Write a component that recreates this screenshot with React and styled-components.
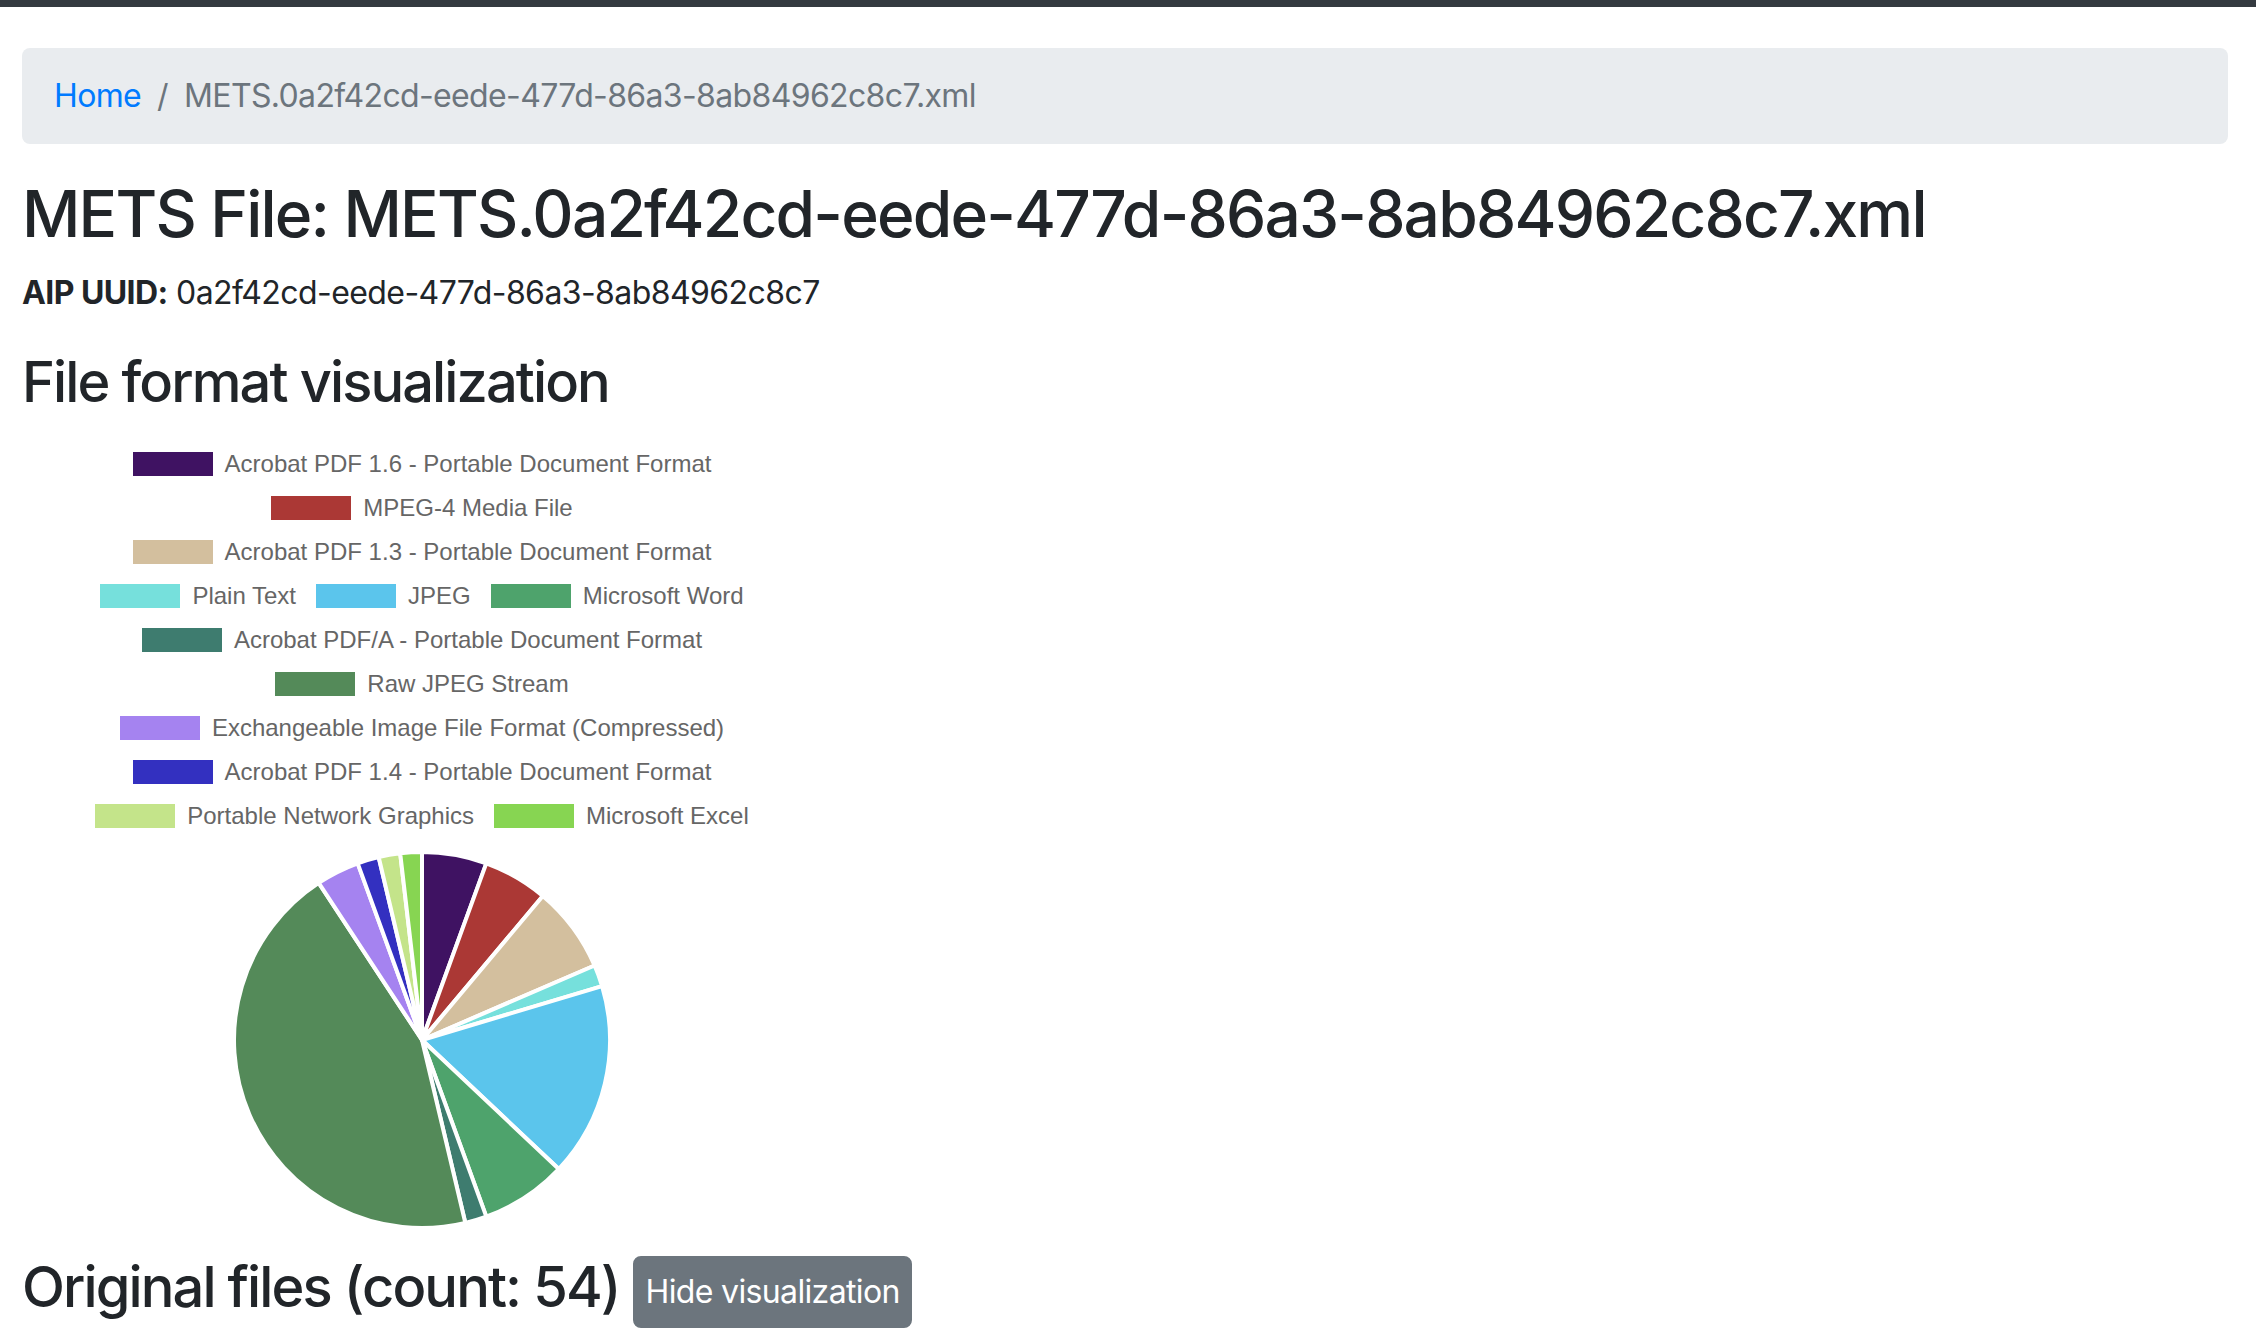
import React from 'react'
import styled, { createGlobalStyle } from 'styled-components'

const GlobalStyle = createGlobalStyle`
  html, body {
    margin: 0;
    padding: 0;
    background: #ffffff;
  }
  body {
    font-family: Inter, "Noto Sans", "Liberation Sans", sans-serif;
    font-size: 32px;
    line-height: 1.5;
    letter-spacing: -0.018em;
    color: #212529;
  }
`

const TopBar = styled.div`
  height: 7px;
  background-color: #343a40;
`

const Page = styled.main`
  padding: 41px 28px 0 22px;
`

const Breadcrumb = styled.nav`
  display: flex;
  align-items: center;
  padding: 24px 32px;
  margin-bottom: 32px;
  background-color: #e9ecef;
  border-radius: 8px;
  line-height: 48px;
  letter-spacing: -0.02em;
`

const Crumb = styled.a`
  color: #007bff;
  text-decoration: none;
`

const Separator = styled.span`
  color: #6c757d;
  padding: 0 16px;
`

const Current = styled.span`
  color: #6c757d;
`

const Title = styled.h2`
  margin: 0 0 16px;
  font-size: 64px;
  font-weight: 500;
  line-height: 1.2;
  letter-spacing: -0.028em;
`

const Meta = styled.p`
  margin: 0 0 32px;
  line-height: 48px;
`

const Label = styled.strong`
  font-weight: 700;
`

const Heading = styled.h3`
  margin: 0 0 16px;
  font-size: 56px;
  font-weight: 500;
  line-height: 1.2;
  letter-spacing: -0.034em;
`

const Chart = styled.div`
  width: 800px;
  height: 800px;
  display: flex;
  flex-direction: column;
  align-items: center;
`

const Legend = styled.ul`
  list-style: none;
  margin: 0;
  padding: 20px 0 0;
  display: flex;
  flex-direction: column;
  align-items: center;
  font-family: "Liberation Sans", Arial, sans-serif;
  font-size: 24px;
  line-height: 24px;
  letter-spacing: 0;
  color: #666666;
`

const LegendRow = styled.li`
  display: flex;
  justify-content: center;
  gap: 20px;
  height: 44px;
`

const LegendItem = styled.span`
  display: flex;
  align-items: flex-start;
  gap: 12px;
  white-space: nowrap;
`

const Swatch = styled.span`
  width: 80px;
  height: 24px;
  background-color: ${(p) => p.color};
`

const Pie = styled.svg`
  display: block;
  flex: none;
`

const FilesRow = styled.div`
  display: flex;
  align-items: flex-start;
  gap: 14px;
  margin-top: 22px;
`

const FilesHeading = styled(Heading)`
  margin: 0;
`

const Button = styled.button`
  margin-top: 2px;
  font-family: inherit;
  font-size: 32px;
  line-height: 44px;
  letter-spacing: -0.02em;
  padding: 12px 10px;
  color: #ffffff;
  background-color: #6c757d;
  border: 2px solid #6c757d;
  border-radius: 8px;
  cursor: pointer;
`

const formats = [
  { name: 'Acrobat PDF 1.6 - Portable Document Format', color: '#3f1262', count: 3 },
  { name: 'MPEG-4 Media File', color: '#ab3835', count: 3 },
  { name: 'Acrobat PDF 1.3 - Portable Document Format', color: '#d3bf9e', count: 4 },
  { name: 'Plain Text', color: '#76e0dc', count: 1 },
  { name: 'JPEG', color: '#5bc5ec', count: 9 },
  { name: 'Microsoft Word', color: '#4ea36c', count: 4 },
  { name: 'Acrobat PDF/A - Portable Document Format', color: '#3e7c6f', count: 1 },
  { name: 'Raw JPEG Stream', color: '#548a59', count: 24 },
  { name: 'Exchangeable Image File Format (Compressed)', color: '#a583f0', count: 2 },
  { name: 'Acrobat PDF 1.4 - Portable Document Format', color: '#3330c0', count: 1 },
  { name: 'Portable Network Graphics', color: '#c4e48a', count: 1 },
  { name: 'Microsoft Excel', color: '#87d552', count: 1 },
]

const legendRows = [[0], [1], [2], [3, 4, 5], [6], [7], [8], [9], [10, 11]]

const PieChart = ({ data, size, radius }) => {
  const total = data.reduce((sum, d) => sum + d.count, 0)
  const c = size / 2
  let angle = -Math.PI / 2
  return (
    <Pie width={size} height={size} viewBox={`0 0 ${size} ${size}`}>
      {data.map((d) => {
        const sweep = (d.count / total) * Math.PI * 2
        const x1 = c + radius * Math.cos(angle)
        const y1 = c + radius * Math.sin(angle)
        angle += sweep
        const x2 = c + radius * Math.cos(angle)
        const y2 = c + radius * Math.sin(angle)
        const large = sweep > Math.PI ? 1 : 0
        return (
          <path
            key={d.name}
            d={`M${c} ${c} L${x1} ${y1} A${radius} ${radius} 0 ${large} 1 ${x2} ${y2} Z`}
            fill={d.color}
            stroke="#ffffff"
            strokeWidth="4"
            strokeLinejoin="round"
          />
        )
      })}
    </Pie>
  )
}

export default function App() {
  return (
    <>
      <GlobalStyle />
      <TopBar />
      <Page>
        <Breadcrumb>
          <Crumb href="#">Home</Crumb>
          <Separator>/</Separator>
          <Current>METS.0a2f42cd-eede-477d-86a3-8ab84962c8c7.xml</Current>
        </Breadcrumb>
        <Title>METS File: METS.0a2f42cd-eede-477d-86a3-8ab84962c8c7.xml</Title>
        <Meta>
          <Label>AIP UUID:</Label> 0a2f42cd-eede-477d-86a3-8ab84962c8c7
        </Meta>
        <Heading>File format visualization</Heading>
        <Chart>
          <Legend>
            {legendRows.map((row, i) => (
              <LegendRow key={i}>
                {row.map((idx) => (
                  <LegendItem key={idx}>
                    <Swatch color={formats[idx].color} />
                    {formats[idx].name}
                  </LegendItem>
                ))}
              </LegendRow>
            ))}
          </Legend>
          <PieChart data={formats} size={384} radius={188} />
        </Chart>
        <FilesRow>
          <FilesHeading>Original files (count: 54)</FilesHeading>
          <Button>Hide visualization</Button>
        </FilesRow>
      </Page>
    </>
  )
}
